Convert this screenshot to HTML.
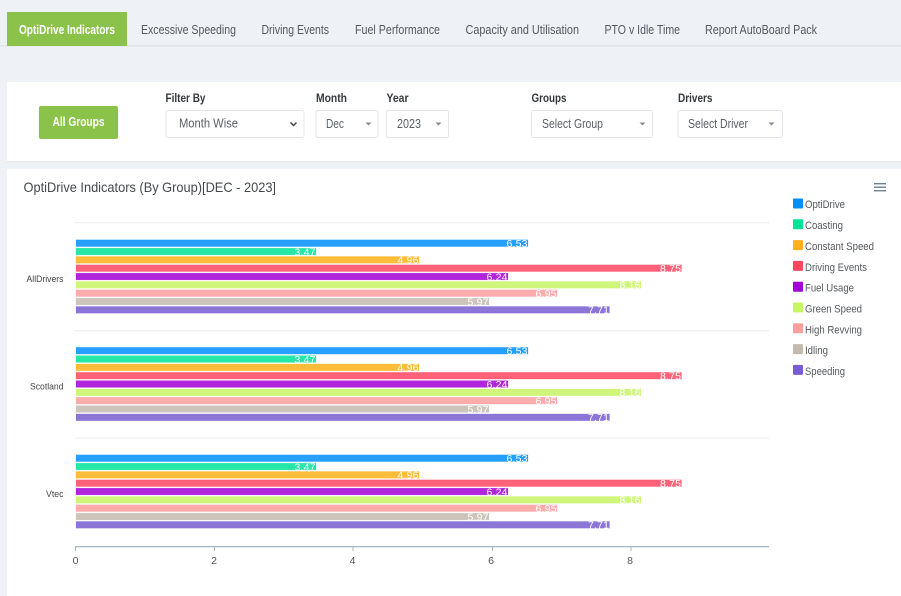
<!DOCTYPE html>
<html><head><meta charset="utf-8"><title>OptiDrive Indicators</title>
<style>
html,body{margin:0;padding:0;background:#eef1f6;width:901px;height:596px;overflow:hidden}
svg{display:block;font-family:"Liberation Sans",Arial,sans-serif;filter:blur(.3px)}
.tab{font-size:12.5px;fill:#55595f}
.lbl{font-size:12px;font-weight:bold;fill:#35383c}
.sel{font-size:12.5px;fill:#5a5f67}
.box{fill:#fff;stroke:#e2e5ec;stroke-width:1}
.arr{fill:#8a8a8a}
.leg{font-size:11px;fill:#55595d}
.cat{font-size:9.5px;fill:#444;text-anchor:end}
.ax{font-size:10.5px;fill:#555;text-anchor:middle}
.v{font-size:10.5px;fill:#fff}
.b rect{fill-opacity:.85;stroke-opacity:.25;stroke-width:.6}
</style></head><body>
<svg width="901" height="596" viewBox="0 0 901 596" xmlns="http://www.w3.org/2000/svg">
<rect width="901" height="596" fill="#eef1f6"/>
<rect x="0" y="45" width="901" height="1.5" fill="#e1e4e9"/>
<rect x="7" y="12" width="120" height="34" fill="#8bc34a"/>
<text x="19" y="34" font-size="12.5" font-weight="bold" fill="#fff" textLength="96" lengthAdjust="spacingAndGlyphs">OptiDrive Indicators</text>
<text class="tab" x="141" y="34" textLength="95" lengthAdjust="spacingAndGlyphs">Excessive Speeding</text>
<text class="tab" x="261.5" y="34" textLength="67.5" lengthAdjust="spacingAndGlyphs">Driving Events</text>
<text class="tab" x="355" y="34" textLength="85" lengthAdjust="spacingAndGlyphs">Fuel Performance</text>
<text class="tab" x="465.5" y="34" textLength="113.5" lengthAdjust="spacingAndGlyphs">Capacity and Utilisation</text>
<text class="tab" x="604.5" y="34" textLength="75.5" lengthAdjust="spacingAndGlyphs">PTO v Idle Time</text>
<text class="tab" x="705" y="34" textLength="112" lengthAdjust="spacingAndGlyphs">Report AutoBoard Pack</text>

<rect x="7" y="82" width="894" height="79" fill="#fff"/>
<rect x="7" y="161" width="894" height="1.2" fill="#e4e7ec"/>
<rect x="39" y="106" width="79" height="33" rx="2" fill="#8bc34a"/>
<text x="52.5" y="126" font-size="12.5" font-weight="bold" fill="#fff" textLength="52" lengthAdjust="spacingAndGlyphs">All Groups</text>

<text class="lbl" x="165.5" y="102" textLength="40" lengthAdjust="spacingAndGlyphs">Filter By</text>
<text class="lbl" x="316" y="102" textLength="31" lengthAdjust="spacingAndGlyphs">Month</text>
<text class="lbl" x="386.5" y="102" textLength="22" lengthAdjust="spacingAndGlyphs">Year</text>
<text class="lbl" x="531.5" y="102" textLength="35" lengthAdjust="spacingAndGlyphs">Groups</text>
<text class="lbl" x="678" y="102" textLength="34.5" lengthAdjust="spacingAndGlyphs">Drivers</text>

<rect class="box" x="166" y="110.5" width="138" height="27" rx="2"/>
<text class="sel" x="179" y="127.5" textLength="59" lengthAdjust="spacingAndGlyphs">Month Wise</text>
<path d="M290.5 122.5 L293.5 125.5 L296.5 122.5" fill="none" stroke="#444" stroke-width="1.5"/>
<rect class="box" x="316" y="110.5" width="62" height="27" rx="2"/>
<text class="sel" x="326" y="128" textLength="18" lengthAdjust="spacingAndGlyphs">Dec</text>
<path class="arr" d="M365.5 122.5h6l-3 3z"/>
<rect class="box" x="386.5" y="110.5" width="62" height="27" rx="2"/>
<text class="sel" x="397" y="128" textLength="24" lengthAdjust="spacingAndGlyphs">2023</text>
<path class="arr" d="M435.5 122.5h6l-3 3z"/>
<rect class="box" x="531.5" y="110.5" width="121" height="27" rx="2"/>
<text class="sel" x="542" y="128" textLength="61" lengthAdjust="spacingAndGlyphs">Select Group</text>
<path class="arr" d="M639.5 122.5h6l-3 3z"/>
<rect class="box" x="678" y="110.5" width="104.500" height="27" rx="2"/>
<text class="sel" x="688" y="128" textLength="60" lengthAdjust="spacingAndGlyphs">Select Driver</text>
<path class="arr" d="M768.5 122.5h6l-3 3z"/>

<rect x="7" y="169" width="894" height="427" fill="#fff"/>
<text x="23.500" y="192" font-size="14" fill="#45494c" textLength="252.500" lengthAdjust="spacingAndGlyphs">OptiDrive Indicators (By Group)[DEC - 2023]</text>
<g fill="#6e8192"><rect x="874" y="183" width="12" height="1.400"/><rect x="874" y="186.500" width="12" height="1.400"/><rect x="874" y="190" width="12" height="1.400"/></g>

<g>
<rect x="793" y="198.500" width="10" height="10" rx="1" fill="#008ffb"/><text class="leg" x="805" y="208" textLength="40" lengthAdjust="spacingAndGlyphs">OptiDrive</text>
<rect x="793" y="219.300" width="10" height="10" rx="1" fill="#00e396"/><text class="leg" x="805" y="229" textLength="38" lengthAdjust="spacingAndGlyphs">Coasting</text>
<rect x="793" y="240.100" width="10" height="10" rx="1" fill="#feb019"/><text class="leg" x="805" y="250" textLength="69" lengthAdjust="spacingAndGlyphs">Constant Speed</text>
<rect x="793" y="260.900" width="10" height="10" rx="1" fill="#ff4560"/><text class="leg" x="805" y="271" textLength="62" lengthAdjust="spacingAndGlyphs">Driving Events</text>
<rect x="793" y="281.700" width="10" height="10" rx="1" fill="#a300d6"/><text class="leg" x="805" y="291.500" textLength="49" lengthAdjust="spacingAndGlyphs">Fuel Usage</text>
<rect x="793" y="302.500" width="10" height="10" rx="1" fill="#c7f464"/><text class="leg" x="805" y="312.500" textLength="57" lengthAdjust="spacingAndGlyphs">Green Speed</text>
<rect x="793" y="323.300" width="10" height="10" rx="1" fill="#fd9e9e"/><text class="leg" x="805" y="333.300" textLength="57" lengthAdjust="spacingAndGlyphs">High Revving</text>
<rect x="793" y="344.100" width="10" height="10" rx="1" fill="#c4bbaf"/><text class="leg" x="805" y="354" textLength="23" lengthAdjust="spacingAndGlyphs">Idling</text>
<rect x="793" y="364.900" width="10" height="10" rx="1" fill="#775dd0"/><text class="leg" x="805" y="374.800" textLength="40" lengthAdjust="spacingAndGlyphs">Speeding</text>
</g>

<g fill="#eff0f1">
<rect x="75" y="222" width="694" height="1.300"/>
<rect x="75" y="330" width="694" height="1.300"/>
<rect x="75" y="437.500" width="694" height="1.300"/>
</g>

<g class="b" transform="translate(0,0)">
<rect x="76" y="239.800" width="452" height="6.800" fill="#008ffb" stroke="#008ffb"/>
<rect x="76" y="248.130" width="240" height="6.800" fill="#00e396" stroke="#00e396"/>
<rect x="76" y="256.460" width="343" height="6.800" fill="#feb019" stroke="#feb019"/>
<rect x="76" y="264.790" width="605.500" height="6.800" fill="#ff4560" stroke="#ff4560"/>
<rect x="76" y="273.120" width="432" height="6.800" fill="#a300d6" stroke="#a300d6"/>
<rect x="76" y="281.450" width="565" height="6.800" fill="#c7f464" stroke="#c7f464"/>
<rect x="76" y="289.780" width="481" height="6.800" fill="#fd9e9e" stroke="#fd9e9e"/>
<rect x="76" y="298.110" width="413" height="6.800" fill="#c4bbaf" stroke="#c4bbaf"/>
<rect x="76" y="306.440" width="533.500" height="6.800" fill="#775dd0" stroke="#775dd0"/>
<text class="v" x="506.500" y="247" textLength="21">6.53</text>
<text class="v" x="294.500" y="255.300" textLength="21">3.47</text>
<text class="v" x="397.500" y="263.700" textLength="21">4.96</text>
<text class="v" x="660" y="272" textLength="21">8.75</text>
<text class="v" x="486.500" y="280.300" textLength="21">6.24</text>
<text class="v" x="619.500" y="288.700" textLength="21">8.16</text>
<text class="v" x="535.500" y="297" textLength="21">6.95</text>
<text class="v" x="467.500" y="305.300" textLength="21">5.97</text>
<text class="v" x="588" y="313.600" textLength="21">7.71</text>
</g>

<g class="b" transform="translate(0,107.500)">
<rect x="76" y="239.800" width="452" height="6.800" fill="#008ffb" stroke="#008ffb"/>
<rect x="76" y="248.130" width="240" height="6.800" fill="#00e396" stroke="#00e396"/>
<rect x="76" y="256.460" width="343" height="6.800" fill="#feb019" stroke="#feb019"/>
<rect x="76" y="264.790" width="605.500" height="6.800" fill="#ff4560" stroke="#ff4560"/>
<rect x="76" y="273.120" width="432" height="6.800" fill="#a300d6" stroke="#a300d6"/>
<rect x="76" y="281.450" width="565" height="6.800" fill="#c7f464" stroke="#c7f464"/>
<rect x="76" y="289.780" width="481" height="6.800" fill="#fd9e9e" stroke="#fd9e9e"/>
<rect x="76" y="298.110" width="413" height="6.800" fill="#c4bbaf" stroke="#c4bbaf"/>
<rect x="76" y="306.440" width="533.500" height="6.800" fill="#775dd0" stroke="#775dd0"/>
<text class="v" x="506.500" y="247" textLength="21">6.53</text>
<text class="v" x="294.500" y="255.300" textLength="21">3.47</text>
<text class="v" x="397.500" y="263.700" textLength="21">4.96</text>
<text class="v" x="660" y="272" textLength="21">8.75</text>
<text class="v" x="486.500" y="280.300" textLength="21">6.24</text>
<text class="v" x="619.500" y="288.700" textLength="21">8.16</text>
<text class="v" x="535.500" y="297" textLength="21">6.95</text>
<text class="v" x="467.500" y="305.300" textLength="21">5.97</text>
<text class="v" x="588" y="313.600" textLength="21">7.71</text>
</g>

<g class="b" transform="translate(0,215)">
<rect x="76" y="239.800" width="452" height="6.800" fill="#008ffb" stroke="#008ffb"/>
<rect x="76" y="248.130" width="240" height="6.800" fill="#00e396" stroke="#00e396"/>
<rect x="76" y="256.460" width="343" height="6.800" fill="#feb019" stroke="#feb019"/>
<rect x="76" y="264.790" width="605.500" height="6.800" fill="#ff4560" stroke="#ff4560"/>
<rect x="76" y="273.120" width="432" height="6.800" fill="#a300d6" stroke="#a300d6"/>
<rect x="76" y="281.450" width="565" height="6.800" fill="#c7f464" stroke="#c7f464"/>
<rect x="76" y="289.780" width="481" height="6.800" fill="#fd9e9e" stroke="#fd9e9e"/>
<rect x="76" y="298.110" width="413" height="6.800" fill="#c4bbaf" stroke="#c4bbaf"/>
<rect x="76" y="306.440" width="533.500" height="6.800" fill="#775dd0" stroke="#775dd0"/>
<text class="v" x="506.500" y="247" textLength="21">6.53</text>
<text class="v" x="294.500" y="255.300" textLength="21">3.47</text>
<text class="v" x="397.500" y="263.700" textLength="21">4.96</text>
<text class="v" x="660" y="272" textLength="21">8.75</text>
<text class="v" x="486.500" y="280.300" textLength="21">6.24</text>
<text class="v" x="619.500" y="288.700" textLength="21">8.16</text>
<text class="v" x="535.500" y="297" textLength="21">6.95</text>
<text class="v" x="467.500" y="305.300" textLength="21">5.97</text>
<text class="v" x="588" y="313.600" textLength="21">7.71</text>
</g>

<text class="cat" x="63.500" y="282" textLength="37" lengthAdjust="spacingAndGlyphs">AllDrivers</text>
<text class="cat" x="63.500" y="389.500" textLength="33.500" lengthAdjust="spacingAndGlyphs">Scotland</text>
<text class="cat" x="63.500" y="497" textLength="17.500" lengthAdjust="spacingAndGlyphs">Vtec</text>

<rect x="75" y="546" width="694" height="1.300" fill="#a9b6c1"/>
<g fill="#a9b6c1">
<rect x="75" y="547" width="1" height="4"/>
<rect x="214" y="547" width="1" height="4"/>
<rect x="352.500" y="547" width="1" height="4"/>
<rect x="492" y="547" width="1" height="4"/>
<rect x="630.500" y="547" width="1" height="4"/>
</g>
<text class="ax" x="75.500" y="564">0</text>
<text class="ax" x="214" y="564">2</text>
<text class="ax" x="352.500" y="564">4</text>
<text class="ax" x="491" y="564">6</text>
<text class="ax" x="630" y="564">8</text>
</svg>
</body></html>
